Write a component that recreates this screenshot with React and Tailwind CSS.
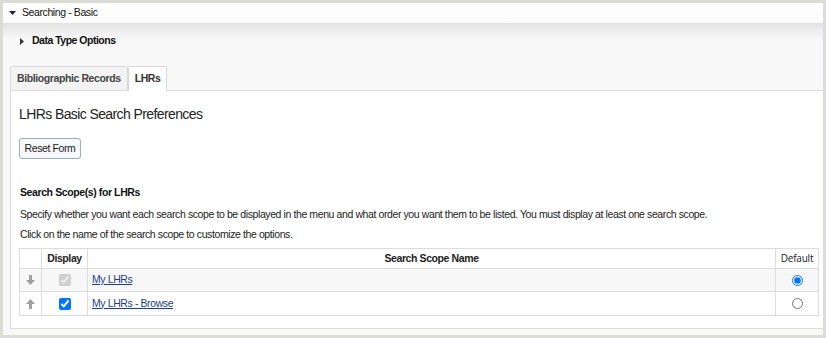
import React from "react";

function Arrow({ up }) {
  return (
    <svg width="9" height="10" viewBox="0 0 9 10" className="block">
      {up ? (
        <path d="M4.5 0 L9 5 L6 5 L6 10 L3 10 L3 5 L0 5 Z" fill="#a0a0a0" />
      ) : (
        <path d="M4.5 10 L9 5 L6 5 L6 0 L3 0 L3 5 L0 5 Z" fill="#a0a0a0" />
      )}
    </svg>
  );
}

export default function App() {
  return (
    <div
      className="w-[826px] h-[338px] bg-[#dcdcd7] p-[3px] overflow-hidden tracking-[-0.4px]"
      style={{ fontFamily: '"Liberation Sans", Arial, sans-serif' }}
    >
      <div className="h-[332px] w-[820px] bg-[#f8f8f8] overflow-hidden">
        {/* header */}
        <div className="h-[20px] bg-gradient-to-b from-white to-[#fbfbfb] flex items-center pl-[6px] text-[10.5px] text-[#111]">
          <svg width="7" height="4" viewBox="0 0 7 4" className="mr-[6px]">
            <path d="M0 0 L7 0 L3.5 4 Z" fill="#222" />
          </svg>
          <span>Searching - Basic</span>
        </div>
        <div className="h-[16px] bg-gradient-to-b from-[#e2e2e2] to-[#f8f8f8]" />
        <div className="flex items-center pl-[17px] -mt-[3px] h-[10px] text-[10.5px] tracking-[-0.5px] font-bold text-[#111]">
          <svg width="4" height="7" viewBox="0 0 4 7" className="mr-[8px]">
            <path d="M0 0 L4 3.5 L0 7 Z" fill="#333" />
          </svg>
          <span>Data Type Options</span>
        </div>
        {/* tabs */}
        <div className="pl-[7px] mt-[20px]">
          <div className="flex items-end h-[24px]">
            <div className="h-[24px] px-[6px] flex items-center border border-b-0 border-[#d8d8d8] bg-[#f3f3f3] text-[10.5px] font-bold text-[#444] rounded-t-[2px]">
              Bibliographic Records
            </div>
            <div className="h-[25px] px-[6px] flex items-center border border-b-0 border-[#d8d8d8] bg-white text-[10.5px] font-bold text-[#333] rounded-t-[2px] -mb-[1px] relative z-10">
              LHRs
            </div>
          </div>
          <div className="bg-white border border-[#dcdcdc] border-r-0 h-[239px] pl-[8px] pt-[14px]">
            <div className="text-[14px] tracking-[-0.6px] text-[#222] leading-[18px]">LHRs Basic Search Preferences</div>
            <button className="mt-[15px] h-[21px] w-[62px] border border-[#9fadbd] rounded-[3px] bg-[#f6f8fa] text-[10.5px] text-[#222]">
              Reset Form
            </button>
            <div className="mt-[27px] pl-[1px] text-[10.5px] font-bold text-[#111] leading-[13px]">Search Scope(s) for LHRs</div>
            <div className="mt-[9px] pl-[1px] text-[10.5px] text-[#222] leading-[13px]">
              Specify whether you want each search scope to be displayed in the menu and what order you want them to be listed. You must display at least one search scope.
            </div>
            <div className="mt-[7px] pl-[1px] text-[10.5px] text-[#222] leading-[13px]">
              Click on the name of the search scope to customize the options.
            </div>
            <table className="mt-[7px] w-[800px] border-collapse text-[10.5px]">
              <thead>
                <tr className="h-[20px]">
                  <th className="w-[22px] border border-[#dcdcdc]"></th>
                  <th className="w-[46px] border border-[#dcdcdc] font-bold text-[#222]">Display</th>
                  <th className="border border-[#dcdcdc] font-bold text-[#222]">Search Scope Name</th>
                  <th className="w-[43px] border border-[#dcdcdc] font-normal text-[#222] text-[10px] tracking-[-0.2px]" style={{ fontFamily: '"Open Sans", sans-serif' }}>Default</th>
                </tr>
              </thead>
              <tbody>
                <tr className="h-[23px] bg-[#f7f7f7]">
                  <td className="border border-[#dcdcdc]">
                    <div className="flex justify-center"><Arrow /></div>
                  </td>
                  <td className="border border-[#dcdcdc]">
                    <div className="flex justify-center">
                      <input type="checkbox" checked disabled readOnly className="m-0 w-[12px] h-[12px]" />
                    </div>
                  </td>
                  <td className="border border-[#dcdcdc] pl-[4px]">
                    <a className="underline text-[#1d3f8a]">My LHRs</a>
                  </td>
                  <td className="border border-[#dcdcdc]">
                    <div className="flex justify-center">
                      <input type="radio" name="d" checked readOnly className="m-0 w-[11px] h-[11px]" />
                    </div>
                  </td>
                </tr>
                <tr className="h-[24px] bg-white">
                  <td className="border border-[#dcdcdc]">
                    <div className="flex justify-center"><Arrow up /></div>
                  </td>
                  <td className="border border-[#dcdcdc]">
                    <div className="flex justify-center">
                      <input type="checkbox" checked readOnly className="m-0 w-[12px] h-[12px]" />
                    </div>
                  </td>
                  <td className="border border-[#dcdcdc] pl-[4px]">
                    <a className="underline text-[#1d3f8a]">My LHRs - Browse</a>
                  </td>
                  <td className="border border-[#dcdcdc]">
                    <div className="flex justify-center">
                      <input type="radio" name="d" readOnly className="m-0 w-[11px] h-[11px]" />
                    </div>
                  </td>
                </tr>
              </tbody>
            </table>
          </div>
        </div>
      </div>
    </div>
  );
}
